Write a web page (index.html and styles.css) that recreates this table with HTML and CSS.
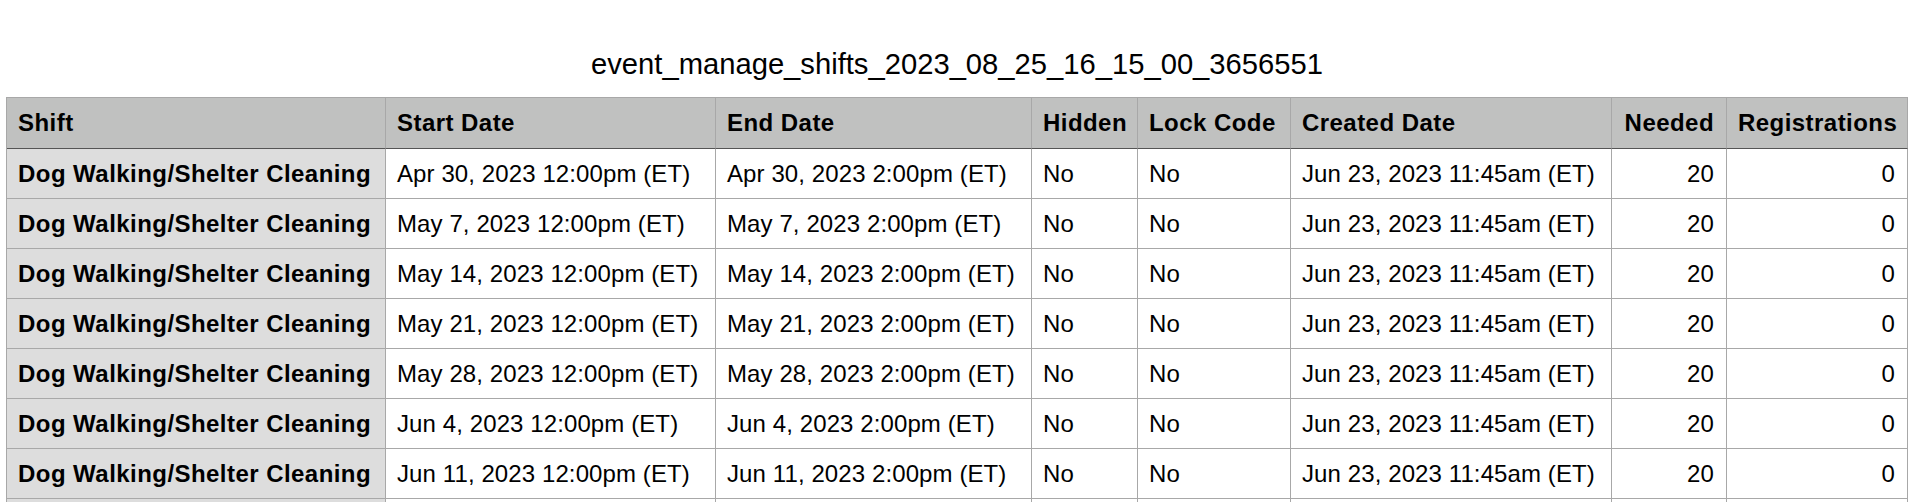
FILE: index.html
```html
<!DOCTYPE html>
<html>
<head>
<meta charset="utf-8">
<title>event_manage_shifts_2023_08_25_16_15_00_3656551</title>
<link rel="stylesheet" href="styles.css">
</head>
<body>
<div class="sheet">
  <h1 class="title">event_manage_shifts_2023_08_25_16_15_00_3656551</h1>
  <table class="grid">
    <colgroup>
      <col class="c-shift">
      <col class="c-start">
      <col class="c-end">
      <col class="c-hidden">
      <col class="c-lock">
      <col class="c-created">
      <col class="c-needed">
      <col class="c-reg">
    </colgroup>
    <thead>
      <tr>
        <th>Shift</th>
        <th>Start Date</th>
        <th>End Date</th>
        <th>Hidden</th>
        <th>Lock Code</th>
        <th>Created Date</th>
        <th class="num">Needed</th>
        <th class="num">Registrations</th>
      </tr>
    </thead>
    <tbody>
      <tr><th class="rowhead">Dog Walking/Shelter Cleaning</th><td>Apr 30, 2023 12:00pm (ET)</td><td>Apr 30, 2023 2:00pm (ET)</td><td>No</td><td>No</td><td>Jun 23, 2023 11:45am (ET)</td><td class="num">20</td><td class="num">0</td></tr>
      <tr><th class="rowhead">Dog Walking/Shelter Cleaning</th><td>May 7, 2023 12:00pm (ET)</td><td>May 7, 2023 2:00pm (ET)</td><td>No</td><td>No</td><td>Jun 23, 2023 11:45am (ET)</td><td class="num">20</td><td class="num">0</td></tr>
      <tr><th class="rowhead">Dog Walking/Shelter Cleaning</th><td>May 14, 2023 12:00pm (ET)</td><td>May 14, 2023 2:00pm (ET)</td><td>No</td><td>No</td><td>Jun 23, 2023 11:45am (ET)</td><td class="num">20</td><td class="num">0</td></tr>
      <tr><th class="rowhead">Dog Walking/Shelter Cleaning</th><td>May 21, 2023 12:00pm (ET)</td><td>May 21, 2023 2:00pm (ET)</td><td>No</td><td>No</td><td>Jun 23, 2023 11:45am (ET)</td><td class="num">20</td><td class="num">0</td></tr>
      <tr><th class="rowhead">Dog Walking/Shelter Cleaning</th><td>May 28, 2023 12:00pm (ET)</td><td>May 28, 2023 2:00pm (ET)</td><td>No</td><td>No</td><td>Jun 23, 2023 11:45am (ET)</td><td class="num">20</td><td class="num">0</td></tr>
      <tr><th class="rowhead">Dog Walking/Shelter Cleaning</th><td>Jun 4, 2023 12:00pm (ET)</td><td>Jun 4, 2023 2:00pm (ET)</td><td>No</td><td>No</td><td>Jun 23, 2023 11:45am (ET)</td><td class="num">20</td><td class="num">0</td></tr>
      <tr><th class="rowhead">Dog Walking/Shelter Cleaning</th><td>Jun 11, 2023 12:00pm (ET)</td><td>Jun 11, 2023 2:00pm (ET)</td><td>No</td><td>No</td><td>Jun 23, 2023 11:45am (ET)</td><td class="num">20</td><td class="num">0</td></tr>
      <tr class="stub" aria-hidden="true"><th class="rowhead"></th><td></td><td></td><td></td><td></td><td></td><td></td><td></td></tr>
    </tbody>
  </table>
</div>
</body>
</html>
```

FILE: styles.css
```css
html, body {
  margin: 0;
  padding: 0;
  background: #ffffff;
}

body {
  font-family: "Liberation Sans", Arial, Helvetica, sans-serif;
  color: #000000;
  overflow: hidden;
}

.sheet {
  padding: 46px 6px 0 6px;
}

.title {
  margin: 0 0 15px 0;
  font-size: 29.2px;
  font-weight: normal;
  line-height: 36px;
  height: 36px;
  text-align: center;
  color: #000;
}

.grid {
  width: 1902px;
  table-layout: fixed;
  border-collapse: separate;
  border-spacing: 0;
  border-top: 1px solid #a8a8a8;
  border-left: 1px solid #a8a8a8;
  font-size: 24px;
}

.c-shift { width: 379px; }
.c-start { width: 330px; }
.c-end { width: 316px; }
.c-hidden { width: 106px; }
.c-lock { width: 153px; }
.c-created { width: 321px; }
.c-needed { width: 115px; }
.c-reg { width: 181px; }

.grid th,
.grid td {
  box-sizing: border-box;
  padding: 0 11px 0 11px;
  border-right: 1px solid #a8a8a8;
  border-bottom: 1px solid #a8a8a8;
  height: 50px;
  line-height: 49px;
  white-space: nowrap;
  overflow: hidden;
  text-align: left;
  vertical-align: middle;
}

.grid td {
  letter-spacing: 0.1px;
}

.grid thead th {
  background: #c0c1c0;
  font-weight: bold;
  letter-spacing: 0.45px;
  height: 51px;
  line-height: 50px;
  border-bottom: 1px solid #555555;
}

.grid .rowhead {
  background: #dddddd;
  font-weight: bold;
  letter-spacing: 0.45px;
}

.grid .num {
  text-align: right;
  padding-right: 12px;
}
```
